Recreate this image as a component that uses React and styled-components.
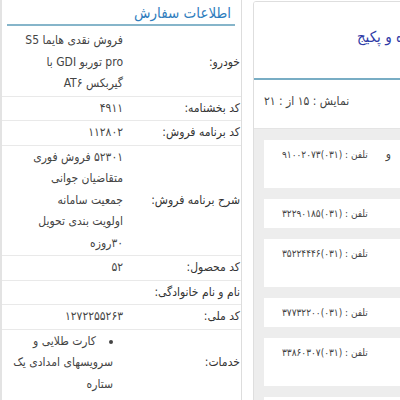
import React from 'react';
import styled, { createGlobalStyle } from 'styled-components';

const GlobalStyle = createGlobalStyle`
  *, *::before, *::after { box-sizing: border-box; }
  html, body { margin: 0; padding: 0; background: #fff; }
  body {
    font-family: 'DejaVu Sans Condensed', 'DejaVu Sans', sans-serif;
    font-stretch: condensed;
    font-size: 12px;
    color: #444;
    overflow: hidden;
  }
`;

const orderRows = [
  { label: 'خودرو:', lines: ['فروش نقدی هایما S5', 'pro توربو GDI با', 'گیربکس AT۶'] },
  { label: 'کد بخشنامه:', lines: ['۴۹۱۱'] },
  { label: 'کد برنامه فروش:', lines: ['۱۱۲۸۰۲'] },
  {
    label: 'شرح برنامه فروش:',
    lines: ['۵۲۳۰۱ فروش فوری', 'متقاضیان جوانی', 'جمعیت سامانه', 'اولویت بندی تحویل', '۳۰روزه'],
  },
  { label: 'کد محصول:', lines: ['۵۲'] },
  { label: 'نام و نام خانوادگی:', lines: [] },
  { label: 'کد ملی:', lines: ['۱۲۷۲۲۵۵۲۶۳'] },
  { label: 'خدمات:', services: [['کارت طلایی و', 'سرویسهای امدادی یک', 'ستاره']] },
];

const dealers = [
  { name: 'برادران و', address: 'خیابان کاوه', phone: '۹۱۰۰۲۰۷۳', spread: true },
  { name: 'نمایندگی ۲۱۴', phone: '۳۲۲۹۰۱۸۵' },
  { name: 'نمایندگی ۲۲۷', address: 'هزار جریب', phone: '۳۵۲۲۴۴۴۶' },
  { name: 'نمایندگی ۲۳۰', phone: '۳۷۷۳۲۲۰۰' },
  { name: 'نمایندگی ۲۴۱', address: 'خیابان جی', phone: '۳۳۸۶۰۳۰۷' },
  { name: 'نمایندگی ۲۵۲', phone: '۳۶۶۱۲۰۴۵' },
];

/*
Whole page: order summary on the left, dealer list on the right.
*/
function App() {
  return (
    <>
      <GlobalStyle />
      <Page>
        <OrderPanel>
          <PanelTitle>اطلاعات سفارش</PanelTitle>
          <InfoTable>
            {orderRows.map((row) => (
              <InfoRow key={row.label}>
                <Label>{row.label}</Label>
                <Value>
                  {row.lines &&
                    row.lines.map((line, i) => <ValueLine key={i}>{line}</ValueLine>)}
                  {row.services && (
                    <ServiceList>
                      {row.services.map((item, i) => (
                        <li key={i}>
                          {item.map((line, j) => (
                            <React.Fragment key={j}>
                              {j > 0 && <br />}
                              {line}
                            </React.Fragment>
                          ))}
                        </li>
                      ))}
                    </ServiceList>
                  )}
                </Value>
              </InfoRow>
            ))}
          </InfoTable>
        </OrderPanel>

        <DealerPanel>
          <DealerHeader>
            <HeaderTitle>انتخاب نماینده و پکیج</HeaderTitle>
            <CountRow>نمایش : ۱۵ از : ۲۱</CountRow>
          </DealerHeader>
          <DealerList>
            {dealers.map((d) => (
              <DealerCard key={d.phone}>
                <DealerInfo>
                  <NameLine $spread={d.spread}>{d.name}</NameLine>
                  {d.address && <AddressLine>{d.address}</AddressLine>}
                </DealerInfo>
                <Phone>تلفن : (۰۳۱){d.phone}</Phone>
              </DealerCard>
            ))}
          </DealerList>
        </DealerPanel>
      </Page>
    </>
  );
}

const Page = styled.div`
  display: flex;
  align-items: flex-start;
  gap: 11px;
  width: 400px;
  height: 400px;
  overflow: hidden;
  direction: ltr;
`;

const OrderPanel = styled.div`
  flex: 0 0 242px;
  min-height: 400px;
  direction: rtl;
  background: #fff;
  border-left: 2px solid #e3e3e3;
  border-right: 1px solid #dddddd;
`;

const PanelTitle = styled.h3`
  margin: 0 6px 0 5px;
  padding: 2px 4px 0 0;
  line-height: 22px;
  font-size: 15px;
  font-weight: normal;
  color: #2f7dbd;
  border-bottom: 2px solid #86b5ca;
`;

const InfoTable = styled.div`
  display: flex;
  flex-direction: column;
`;

const InfoRow = styled.div`
  display: grid;
  grid-template-columns: 116px 1fr;
  align-items: center;
  border-top: 1px solid #e9e9e9;
  &:first-child { border-top: none; padding-top: 3px; }
`;

const Label = styled.div`
  padding: 1px 1px 1px 0;
  line-height: 21.5px;
  color: #333;
  white-space: nowrap;
`;

const Value = styled.div`
  padding: 1px 2px 1px 4px;
  min-height: 23.5px;
  color: #444;
`;

const ValueLine = styled.div`
  line-height: 21.5px;
  white-space: nowrap;
`;

const ServiceList = styled.ul`
  margin: 0;
  padding: 0 10px 0 0;
  list-style: disc inside;
  line-height: 21.5px;
  white-space: nowrap;
`;

const DealerPanel = styled.div`
  flex: 0 0 237px;
  min-height: 400px;
  margin-top: 1px;
  direction: rtl;
  border: 1px solid #dedede;
  border-radius: 3px;
  overflow: hidden;
`;

const DealerHeader = styled.div`
  background: #fff;
`;

const HeaderTitle = styled.h2`
  margin: 0;
  padding: 24px 14px 30px;
  line-height: 22px;
  font-size: 15px;
  font-weight: normal;
  color: #2e3aa6;
  white-space: nowrap;
  border-bottom: 2px solid #78adc4;
`;

const CountRow = styled.div`
  padding: 11px 10px 17px;
  line-height: 20px;
  text-align: left;
  color: #444;
`;

const DealerList = styled.div`
  display: flex;
  flex-direction: column;
  gap: 11px;
  padding: 11px 10px 11px;
  background: #ededed;
  border-top: 1px solid #e4e4e4;
`;

const DealerCard = styled.div`
  display: flex;
  align-items: flex-start;
  gap: 18px;
  padding: 5px 5px 5px 18px;
  background: #fff;
`;

const DealerInfo = styled.div`
  flex: 1;
  min-width: 0;
  line-height: 19px;
  color: #444;
  white-space: nowrap;
`;

const NameLine = styled.div`
  text-align: ${(p) => (p.$spread ? 'justify' : 'right')};
  text-align-last: ${(p) => (p.$spread ? 'justify' : 'auto')};
`;

const AddressLine = styled.div`
  color: #555;
`;

const Phone = styled.div`
  flex: none;
  line-height: 19px;
  font-size: 10px;
  white-space: nowrap;
  color: #444;
`;

export default App;
